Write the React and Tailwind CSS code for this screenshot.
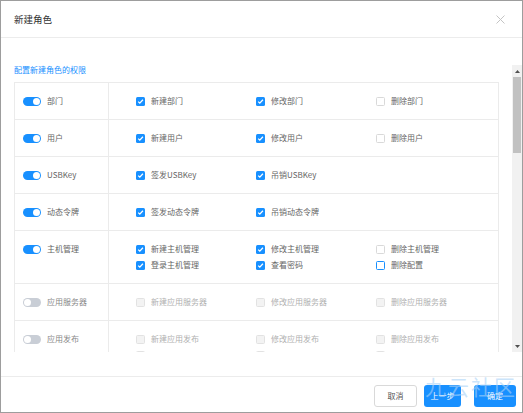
import React from "react";

const FONT = { fontFamily: '"Noto Sans CJK SC", "Noto Sans", sans-serif' };

function Toggle({ on }) {
  return on ? (
    <span className="relative inline-block w-[18px] h-[9px] rounded-full bg-[#1890ff] shrink-0">
      <span className="absolute right-[1px] top-[1px] w-[7px] h-[7px] rounded-full bg-white" />
    </span>
  ) : (
    <span className="relative inline-block w-[18px] h-[9px] rounded-full bg-[#c9ced6] shrink-0">
      <span className="absolute left-[1px] top-[1px] w-[7px] h-[7px] rounded-full bg-white" />
    </span>
  );
}

function Box({ state }) {
  if (state === "on")
    return (
      <span className="w-[9px] h-[9px] rounded-[1.5px] bg-[#1890ff] flex items-center justify-center shrink-0">
        <svg width="7" height="7" viewBox="0 0 7 7">
          <path d="M1.2 3.6 L2.8 5.1 L5.9 1.8" stroke="white" strokeWidth="1.3" fill="none" />
        </svg>
      </span>
    );
  if (state === "focus")
    return <span className="w-[9px] h-[9px] rounded-[1.5px] bg-white border border-[#1890ff] shrink-0" />;
  if (state === "dis")
    return <span className="w-[9px] h-[9px] rounded-[1.5px] bg-[#f3f3f3] border border-[#e2e2e2] shrink-0" />;
  return <span className="w-[9px] h-[9px] rounded-[1.5px] bg-white border border-[#d9d9d9] shrink-0" />;
}

function Item({ state, label }) {
  const dis = state === "dis";
  return (
    <div className="flex items-start gap-[6px] h-[16px] pt-[3.5px]">
      <Box state={state} />
      <span className={(dis ? "text-[#b0b0b0]" : "text-[#666]") + " -mt-[3.5px]"}>{label}</span>
    </div>
  );
}

const rows = [
  { on: true, name: "部门", items: [["on", "新建部门"], ["on", "修改部门"], ["off", "删除部门"]] },
  { on: true, name: "用户", items: [["on", "新建用户"], ["on", "修改用户"], ["off", "删除用户"]] },
  { on: true, name: "USBKey", items: [["on", "签发USBKey"], ["on", "吊销USBKey"]] },
  { on: true, name: "动态令牌", items: [["on", "签发动态令牌"], ["on", "吊销动态令牌"]] },
  {
    on: true,
    name: "主机管理",
    items: [
      ["on", "新建主机管理"],
      ["on", "修改主机管理"],
      ["off", "删除主机管理"],
      ["on", "登录主机管理"],
      ["on", "查看密码"],
      ["focus", "删除配置"],
    ],
  },
  { on: false, name: "应用服务器", items: [["dis", "新建应用服务器"], ["dis", "修改应用服务器"], ["dis", "删除应用服务器"]] },
  {
    on: false,
    name: "应用发布",
    items: [
      ["dis", "新建应用发布"],
      ["dis", "修改应用发布"],
      ["dis", "删除应用发布"],
      ["dis", ""],
      ["dis", ""],
      ["dis", ""],
    ],
  },
];

export default function App() {
  return (
    <div
      className="relative w-[523px] h-[413px] bg-white border border-[#9d9d9d] flex flex-col overflow-hidden text-[8px] leading-[16px]"
      style={FONT}
    >
      {/* Header */}
      <div className="h-[37px] shrink-0 border-b border-[#ececec] flex items-center justify-between pl-[13px] pr-[17px]">
        <span className="text-[9.5px] text-[#333]">新建角色</span>
        <svg width="9" height="9" viewBox="0 0 9 9">
          <path d="M0.5 0.5 L8.5 8.5 M8.5 0.5 L0.5 8.5" stroke="#c4c4c4" strokeWidth="1" />
        </svg>
      </div>

      {/* Body scroll region */}
      <div className="mt-[27px] h-[287px] shrink-0 flex">
        <div className="flex-1 overflow-hidden pl-[13px] pr-[13px]">
          <div className="h-[17px] leading-[9px] text-[#1890ff]">配置新建角色的权限</div>
          <div className="border-t border-x border-[#ebebeb]">
            {rows.map((r, i) => (
              <div key={i} className="flex border-b border-[#ebebeb]">
                <div className="w-[94px] shrink-0 border-r border-[#ebebeb] py-[10px] pl-[8px] flex items-start">
                  <div className="flex items-center gap-[6px] h-[16px]">
                    <Toggle on={r.on} />
                    <span className={r.on ? "text-[#666]" : "text-[#888]"}>{r.name}</span>
                  </div>
                </div>
                <div className="flex-1 py-[10px] pl-[27px] grid grid-cols-[120px_120px_120px]">
                  {r.items.map(([s, l], j) => (
                    <Item key={j} state={s} label={l} />
                  ))}
                </div>
              </div>
            ))}
          </div>
        </div>
        {/* Scrollbar */}
        <div className="w-[10px] shrink-0 bg-[#f1f1f1] flex flex-col items-center">
          <div className="h-[12px] w-full flex items-center justify-center">
            <svg width="5" height="3" viewBox="0 0 5 3">
              <path d="M0 3 L2.5 0 L5 3 Z" fill="#505050" />
            </svg>
          </div>
          <div className="w-[8px] h-[76px] bg-[#c1c1c1]" />
          <div className="flex-1" />
          <div className="h-[12px] w-full flex items-center justify-center">
            <svg width="5" height="3" viewBox="0 0 5 3">
              <path d="M0 0 L5 0 L2.5 3 Z" fill="#505050" />
            </svg>
          </div>
        </div>
      </div>

      {/* Footer */}
      <div className="mt-[24px] border-t border-[#ececec] pt-[8px] pr-[6px] flex justify-end items-start">
        <button className="w-[43px] h-[22px] rounded-[3px] border border-[#d9d9d9] bg-white text-[#555] text-[8px]">
          取消
        </button>
        <button className="ml-[7px] w-[37px] h-[22px] rounded-[3px] bg-[#1890ff] text-white text-[8px]">
          上一步
        </button>
        <button className="ml-[13px] w-[42px] h-[22px] rounded-[3px] bg-[#1890ff] text-white text-[8px]">
          确定
        </button>
      </div>

      {/* watermark */}
      <div className="absolute left-[424px] top-[374px] text-[21px] leading-[22px] tracking-[2px] text-[#a9d2f7]/60 pointer-events-none select-none">
        九云社区
      </div>
    </div>
  );
}
